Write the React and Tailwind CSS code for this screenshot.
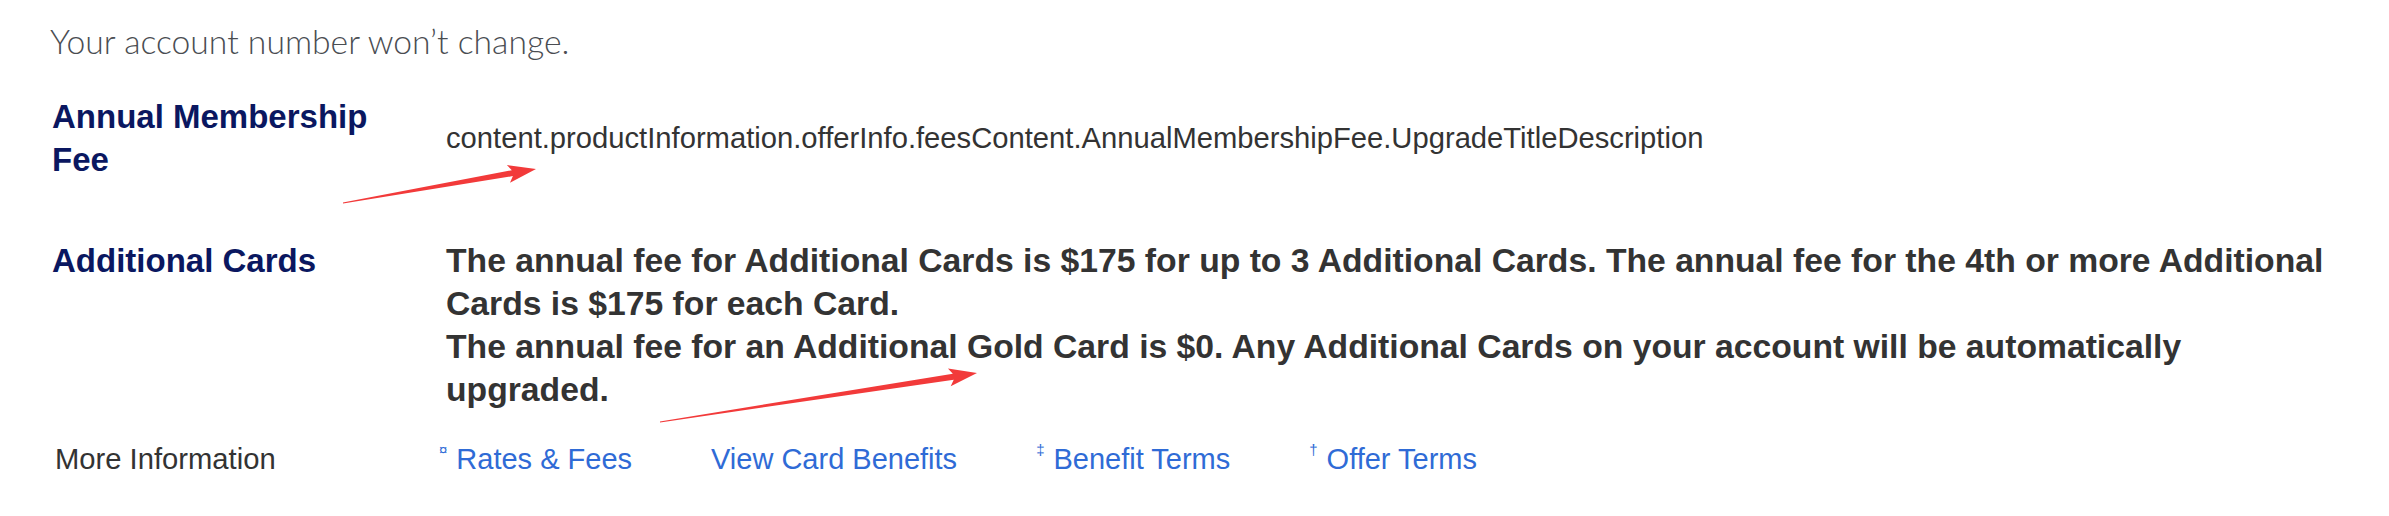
import React from "react";

const links = [
  { sym: "\u00a4", label: "Rates & Fees" },
  { sym: "", label: "View Card Benefits" },
  { sym: "\u2021", label: "Benefit Terms" },
  { sym: "\u2020", label: "Offer Terms" },
];

function Arrow({ x1, y1, x2, y2 }) {
  // tapered red annotation arrow
  const dx = x2 - x1;
  const dy = y2 - y1;
  const len = Math.hypot(dx, dy);
  const ux = dx / len;
  const uy = dy / len;
  const nx = -uy;
  const ny = ux;
  const headLen = 24;
  const headW = 9;
  const bx = x2 - ux * headLen;
  const by = y2 - uy * headLen;
  const pts = [
    [x1 + nx * 0.5, y1 + ny * 0.5],
    [bx + nx * 3, by + ny * 3],
    [bx + nx * headW - ux * 4, by + ny * headW - uy * 4],
    [x2, y2],
    [bx - nx * headW - ux * 4, by - ny * headW - uy * 4],
    [bx - nx * 3, by - ny * 3],
    [x1 - nx * 0.5, y1 - ny * 0.5],
  ];
  return <polygon points={pts.map((p) => p.join(",")).join(" ")} fill="#f23a3a" />;
}

export default function App() {
  return (
    <div className="relative w-[2389px] h-[516px] bg-white font-['Liberation_Sans',Arial,sans-serif]">
      <div className="pl-[50px] pt-[21px]">
        <p className="font-['Lato',sans-serif] font-light text-[33.7px] leading-[40px] text-[#4a4d52]">
          Your account number won’t change.
        </p>

        <div className="mt-[34px] flex items-center">
          <div className="w-[396px] shrink-0 pl-[2px]">
            <div className="w-[340px] text-[33px] leading-[43px] font-bold text-[#0a1760]">
              Annual Membership Fee
            </div>
          </div>
          <div className="text-[29.2px] leading-[43px] text-[#333333]">
            content.productInformation.offerInfo.feesContent.AnnualMembershipFee.UpgradeTitleDescription
          </div>
        </div>

        <div className="mt-[58px] flex items-start">
          <div className="w-[396px] shrink-0 pl-[2px]">
            <div className="text-[33px] leading-[43px] font-bold text-[#0a1760]">
              Additional Cards
            </div>
          </div>
          <div className="w-[1890px] text-[33.7px] leading-[43px] font-bold text-[#333333]">
            <p>
              The annual fee for Additional Cards is $175 for up to 3 Additional Cards. The annual fee for the 4th or more Additional Cards is $175 for each Card.
            </p>
            <p>
              The annual fee for an Additional Gold Card is $0. Any Additional Cards on your account will be automatically upgraded.
            </p>
          </div>
        </div>

        <div className="mt-[27px] flex items-center">
          <div className="w-[389px] shrink-0 pl-[5px] text-[29.2px] leading-[43px] text-[#333333]">
            More Information
          </div>
          <div className="flex items-center gap-[79px]">
            {links.map((l) => (
              <a key={l.label} href="#" className="flex items-start text-[29px] leading-[43px] text-[#2f6bd6]">
                {l.sym && <span className="text-[15px] leading-[20px] mr-[9px] mt-[2px]">{l.sym}</span>}
                <span>{l.label}</span>
              </a>
            ))}
          </div>
        </div>
      </div>

      <svg className="absolute inset-0 pointer-events-none" width="2389" height="516">
        <Arrow x1={343} y1={203} x2={536} y2={169} />
        <Arrow x1={660} y1={422} x2={977} y2={373} />
      </svg>
    </div>
  );
}
